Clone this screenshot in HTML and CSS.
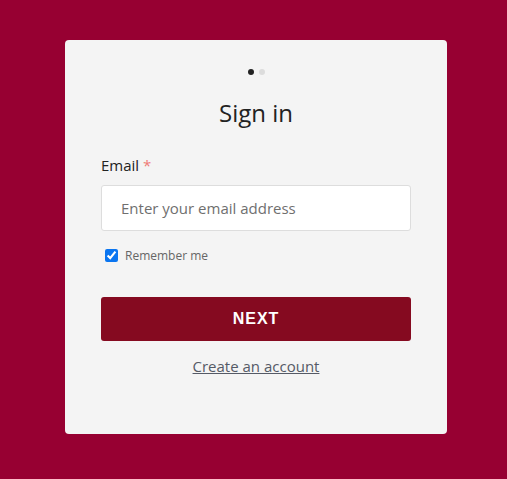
FILE: index.html
```html
<!DOCTYPE html>
<html>
<head>
<meta charset="utf-8">
<link rel="stylesheet" href="styles.css">
</head>
<body>
<div class="card">
  <div class="dots"><span class="dot active"></span><span class="dot"></span></div>
  <h1 class="title">Sign in</h1>
  <label class="label" for="email">Email <span class="req">*</span></label>
  <input class="input" id="email" type="email" placeholder="Enter your email address">
  <label class="remember"><input type="checkbox" checked class="check"> <span>Remember me</span></label>
  <button class="btn">NEXT</button>
  <div class="link-row"><a href="#" class="link">Create an account</a></div>
</div>
</body>
</html>
```
FILE: styles.css
```css
html, body { margin: 0; padding: 0; }
body {
  background: #970032;
  width: 507px;
  height: 479px;
  font-family: "Open Sans", sans-serif;
  overflow: hidden;
}
.card {
  box-sizing: border-box;
  margin: 40px 0 0 65px;
  width: 382px;
  height: 394px;
  background: #f4f4f4;
  border-radius: 4px;
  padding: 29px 36px 0;
  display: flex;
  flex-direction: column;
}
.dots { display: flex; justify-content: center; gap: 5px; height: 6px; }
.dot { width: 6px; height: 6px; border-radius: 50%; background: #dcdcdc; }
.dot.active { background: #222; }
.title {
  margin: 22px 0 0;
  font-size: 24px;
  font-weight: 400;
  line-height: 32px;
  text-align: center;
  color: #222;
}
.label {
  margin-top: 25px;
  font-size: 15px;
  line-height: 22px;
  color: #222;
}
.req { color: #ef7b76; }
.input {
  box-sizing: border-box;
  margin-top: 9px;
  width: 310px;
  height: 46px;
  border: 1px solid #dddddd;
  border-radius: 3px;
  background: #fff;
  padding: 0 19px;
  font-family: "Open Sans", sans-serif;
  font-size: 15px;
  color: #222;
  outline: none;
}
.input::placeholder { color: #6f6f6f; }
.remember {
  margin-top: 16px;
  display: flex;
  align-items: center;
  font-size: 12px;
  color: #666;
  height: 16px;
}
.check { margin: 0 7px 0 4px; width: 13px; height: 13px; accent-color: #0a75f0; }
.btn {
  margin-top: 34px;
  width: 310px;
  height: 44px;
  border: none;
  border-radius: 3px;
  background: #850a20;
  color: #fff;
  font-family: "Liberation Sans", Arial, sans-serif;
  font-weight: 700;
  font-size: 16px;
  letter-spacing: 1px;
}
.link-row { margin-top: 14px; text-align: center; }
.link {
  font-size: 15px;
  line-height: 22px;
  color: #555a66;
  text-decoration: underline;
}
```
